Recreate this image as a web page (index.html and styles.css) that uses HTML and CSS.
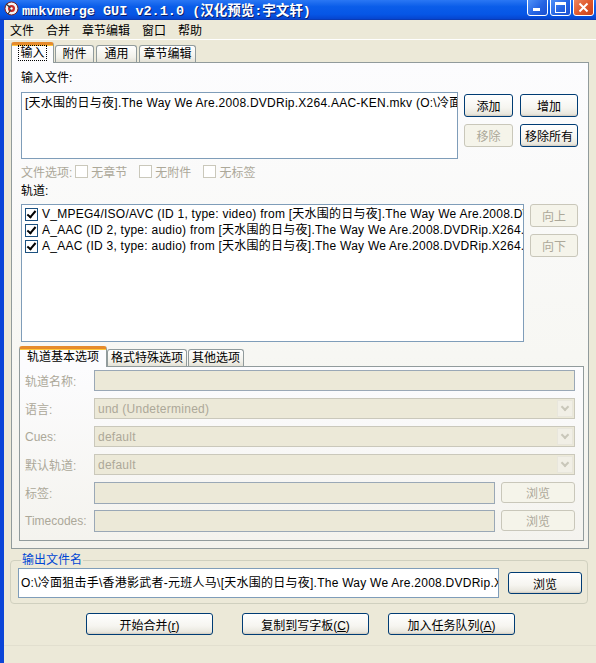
FILE: index.html
```html
<!DOCTYPE html>
<html lang="zh-CN">
<head>
    <meta charset="UTF-8">
    <title>mmkvmerge GUI</title>
    <link rel="stylesheet" href="styles.css">
</head>
<body>
<div class="window">
    <div class="titlebar">
        <svg class="app-icon" width="15" height="15" viewBox="0 0 15 15">
            <circle cx="7.5" cy="7.5" r="6.5" fill="#f4f4f4" stroke="#7a1d1d" stroke-width="1"/>
            <circle cx="7.5" cy="7.5" r="3.5" fill="#c92a2a"/>
            <path d="M2 3 L7.5 7.5 L4 13" stroke="#333" stroke-width="1.2" fill="none"/>
            <circle cx="7.5" cy="7.5" r="1.2" fill="#fff"/>
        </svg>
        <span class="title">mmkvmerge GUI v2.1.0 (汉化预览:宇文轩)</span>
        <div class="caption-btns">
            <span class="cap cap-min"><i></i></span>
            <span class="cap cap-max"><i></i></span>
            <span class="cap cap-close">
                <svg width="11" height="11" viewBox="0 0 11 11"><path d="M1.5 1.5 L9.5 9.5 M9.5 1.5 L1.5 9.5" stroke="#fff" stroke-width="2"/></svg>
            </span>
        </div>
    </div>

    <div class="menubar">
        <span>文件</span><span>合并</span><span>章节编辑</span><span>窗口</span><span>帮助</span>
    </div>

    <div class="client">
        <div class="tabs main-tabs">
            <span class="tab active"><span class="focus">输入</span></span>
            <span class="tab">附件</span>
            <span class="tab">通用</span>
            <span class="tab">章节编辑</span>
        </div>

        <div class="tab-panel">
            <div class="label">输入文件:</div>
            <div class="files-row">
                <div class="listbox files">
                    <div class="item">[天水围的日与夜].The Way We Are.2008.DVDRip.X264.AAC-KEN.mkv (O:\冷面狙击手\香港影武者-元班人马)</div>
                </div>
                <div class="file-buttons">
                    <button class="btn">添加</button>
                    <button class="btn">增加</button>
                    <button class="btn" disabled>移除</button>
                    <button class="btn">移除所有</button>
                </div>
            </div>

            <div class="options disabled">
                <span>文件选项:</span>
                <label class="check"><span class="box"></span>无章节</label>
                <label class="check"><span class="box"></span>无附件</label>
                <label class="check"><span class="box"></span>无标签</label>
            </div>

            <div class="label tracks-label">轨道:</div>
            <div class="tracks-row">
                <div class="listbox tracks">
                    <div class="item"><span class="box checked"></span>V_MPEG4/ISO/AVC (ID 1, type: video) from [天水围的日与夜].The Way We Are.2008.DVDRip.X264.AAC-KEN.mkv</div>
                    <div class="item"><span class="box checked"></span>A_AAC (ID 2, type: audio) from [天水围的日与夜].The Way We Are.2008.DVDRip.X264.AAC-KEN.mkv</div>
                    <div class="item"><span class="box checked"></span>A_AAC (ID 3, type: audio) from [天水围的日与夜].The Way We Are.2008.DVDRip.X264.AAC-KEN.mkv</div>
                </div>
                <div class="track-buttons">
                    <button class="btn" disabled>向上</button>
                    <button class="btn" disabled>向下</button>
                </div>
            </div>

            <div class="tabs sub-tabs">
                <span class="tab active">轨道基本选项</span>
                <span class="tab">格式特殊选项</span>
                <span class="tab">其他选项</span>
            </div>
            <div class="sub-panel">
                <div class="field-row">
                    <span class="field-label">轨道名称:</span>
                    <div class="textbox"></div>
                </div>
                <div class="field-row">
                    <span class="field-label">语言:</span>
                    <div class="combo"><span>und (Undetermined)</span><span class="drop"></span></div>
                </div>
                <div class="field-row">
                    <span class="field-label">Cues:</span>
                    <div class="combo"><span>default</span><span class="drop"></span></div>
                </div>
                <div class="field-row">
                    <span class="field-label">默认轨道:</span>
                    <div class="combo"><span>default</span><span class="drop"></span></div>
                </div>
                <div class="field-row">
                    <span class="field-label">标签:</span>
                    <div class="textbox short"></div>
                    <button class="btn browse" disabled>浏览</button>
                </div>
                <div class="field-row">
                    <span class="field-label">Timecodes:</span>
                    <div class="textbox short"></div>
                    <button class="btn browse" disabled>浏览</button>
                </div>
            </div>
        </div>

        <fieldset class="group">
            <legend>输出文件名</legend>
            <div class="output-row">
                <div class="output">O:\冷面狙击手\香港影武者-元班人马\[天水围的日与夜].The Way We Are.2008.DVDRip.X264.AAC-KEN.mkv</div>
                <button class="btn browse-out">浏览</button>
            </div>
        </fieldset>

        <div class="actions">
            <button class="btn action">开始合并(<u>r</u>)</button>
            <button class="btn action copy">复制到写字板(<u>C</u>)</button>
            <button class="btn action queue">加入任务队列(<u>A</u>)</button>
        </div>
    </div>
    <div class="statusbar"></div>
</div>
</body>
</html>
```

FILE: styles.css
```css
body {
    margin: 0;
    width: 596px;
    height: 663px;
    overflow: hidden;
    font-family: "Liberation Sans", "Noto Sans CJK SC", sans-serif;
    font-size: 12px;
    color: #000;
    background-color: #ece9d8;
}

.window {
    height: 663px;
    border-left: 4px solid #0b45d8;
    background-color: #ece9d8;
    display: flex;
    flex-direction: column;
}

/* title bar */
.titlebar {
    height: 19px;
    margin-left: -4px;
    padding-left: 4px;
    display: flex;
    align-items: center;
    background: linear-gradient(#2a77f4, #0a5de9 35%, #0656e6 75%, #0645cf);
    border-bottom: 1px solid #0a3bb5;
}

.app-icon {
    margin-top: -2px;
}

.title {
    margin-left: 3px;
    font-family: "Liberation Mono", "Noto Sans CJK SC", monospace;
    font-weight: bold;
    font-size: 13.5px;
    color: #fff;
    text-shadow: 1px 1px 0 #0a1e6b;
    white-space: nowrap;
    margin-top: -2px;
}

.caption-btns {
    margin-left: auto;
    margin-right: 2px;
    display: flex;
    gap: 2px;
    align-self: flex-start;
    margin-top: -5px;
}

.cap {
    width: 19px;
    height: 19px;
    border: 1px solid #fff;
    border-radius: 3px;
    background: linear-gradient(135deg, #5a9bfc, #2463e3 60%, #1b4fd0);
    display: flex;
    align-items: center;
    justify-content: center;
    position: relative;
}

.cap-min i {
    position: absolute;
    left: 5px;
    bottom: 4px;
    width: 7px;
    height: 3px;
    background: #fff;
}

.cap-max i {
    width: 9px;
    height: 7px;
    border: 1px solid #fff;
    border-top-width: 3px;
    margin-top: 4px;
}

.cap-close {
    background: linear-gradient(135deg, #f0906b, #e05a2e 55%, #c8401a);
}

.cap-close svg {
    margin-top: 4px;
}

/* menu */
.menubar {
    height: 19px;
    display: flex;
    align-items: center;
    border-bottom: 1px solid #fff;
}

.menubar span {
    padding: 0 6px;
}

/* client area */
.client {
    padding-left: 7px;
    padding-top: 2px;
}

.tabs {
    display: flex;
    align-items: flex-end;
    height: 20px;
    position: relative;
    z-index: 1;
}

.tab {
    height: 17px;
    line-height: 16px;
    text-align: center;
    border: 1px solid #919b9c;
    border-bottom: none;
    border-radius: 3px 3px 0 0;
    background: linear-gradient(#fff, #f2f1ea 70%, #e3e1d6);
    margin-right: 2px;
    box-sizing: border-box;
}

.tab.active {
    line-height: 16px;
    background: #fcfcfe;
    border-top: 3px solid #e68b2c;
    box-shadow: inset 0 1px 0 #ffc73c;
    margin-bottom: -1px;
    height: 21px;
}

.main-tabs .tab:nth-child(1) { width: 43px; margin-right: 1px; }
.main-tabs .tab:nth-child(2) { width: 39px; margin-right: 2px; }
.main-tabs .tab:nth-child(3) { width: 41px; margin-right: 2px; }
.main-tabs .tab:nth-child(4) { width: 57px; }

.focus {
    outline: 1px dotted #000;
    outline-offset: 0;
    padding: 0 1px;
}

.tab-panel {
    width: 578px;
    height: 487px;
    box-sizing: border-box;
    border: 1px solid #919b9c;
    background: linear-gradient(#fcfcfe, #f7f7f3 60%, #f3f2ec);
    padding: 8px 9px 0 9px;
}

.label {
    height: 14px;
    line-height: 14px;
}

.listbox {
    box-sizing: border-box;
    border: 1px solid #7f9db9;
    background: #fff;
    overflow: hidden;
    white-space: nowrap;
}

.files-row {
    display: flex;
    margin-top: 7px;
}

.listbox.files {
    width: 437px;
    height: 67px;
    padding: 2px 3px;
}

.item {
    height: 16px;
    line-height: 16px;
    display: flex;
    align-items: center;
    letter-spacing: 0.25px;
}

.file-buttons {
    margin-left: 6px;
    margin-top: 2px;
    display: grid;
    grid-template-columns: 49px 58px;
    grid-auto-rows: 23px;
    column-gap: 7px;
    row-gap: 7px;
    align-self: flex-start;
}

.btn {
    font-family: inherit;
    font-size: 12px;
    color: #000;
    padding: 0;
    box-sizing: border-box;
    border: 1px solid #003c74;
    border-radius: 3px;
    background: linear-gradient(#fff, #f6f5f0 60%, #e9e7de 90%, #d6d0c5);
    box-shadow: inset 0 -1px 0 #d6d0c5;
}

.btn:disabled {
    color: #aca899;
    border-color: #c9c7ba;
    background: #f5f4ea;
    box-shadow: none;
}

.options {
    margin-top: 5px;
    height: 14px;
    display: flex;
    align-items: center;
    color: #aca899;
}

.options > span {
    margin-right: 3px;
}

.check {
    display: flex;
    align-items: center;
    margin-right: 12px;
}

.box {
    width: 13px;
    height: 13px;
    box-sizing: border-box;
    border: 1px solid #1c5180;
    background: #fff;
    margin-right: 3px;
    flex-shrink: 0;
    position: relative;
}

.options .box {
    border-color: #cac8bb;
}

.box.checked::after {
    content: "";
    position: absolute;
    left: 3px;
    top: 0px;
    width: 3px;
    height: 7px;
    border: solid #000;
    border-width: 0 2px 2px 0;
    transform: rotate(40deg);
}

.tracks-label {
    margin-top: 6px;
}

.tracks-row {
    display: flex;
    margin-top: 6px;
}

.listbox.tracks {
    width: 503px;
    height: 138px;
    padding: 1px 3px;
}

.tracks .box {
    margin-right: 4px;
    letter-spacing: 0;
}

.track-buttons {
    margin-left: 6px;
    display: flex;
    flex-direction: column;
    gap: 7px;
}

.track-buttons .btn {
    width: 48px;
    height: 23px;
}

/* sub tabs */
.sub-tabs {
    margin-top: 4px;
    margin-left: -9px;
    padding-left: 7px;
}

.sub-tabs .tab {
    padding: 0 3px;
    margin-right: 1px;
}

.sub-tabs .tab.active {
    padding: 0 7px;
    margin-right: 0;
}

.sub-panel {
    width: 565px;
    height: 175px;
    margin-left: -2px;
    box-sizing: border-box;
    border: 1px solid #919b9c;
    background: linear-gradient(#fcfcfe, #f4f3ee);
    padding: 3px 7px 0 5px;
    display: flex;
    flex-direction: column;
    gap: 7px;
}

.field-row {
    display: flex;
    align-items: center;
    height: 21px;
}

.field-label {
    width: 69px;
    color: #aca899;
}

.textbox {
    width: 481px;
    height: 21px;
    box-sizing: border-box;
    border: 1px solid #9aa8b6;
    background: #ece9d8;
}

.textbox.short {
    width: 401px;
    height: 22px;
}

.combo {
    width: 481px;
    height: 21px;
    box-sizing: border-box;
    border: 1px solid #cac8bb;
    background: #ece9d8;
    color: #aca899;
    display: flex;
    align-items: center;
    padding-left: 3px;
    letter-spacing: 0.25px;
}

.drop {
    margin-left: auto;
    width: 16px;
    height: 17px;
    margin-right: 1px;
    border: 1px solid #e8e6dc;
    background: #f1efe6;
    box-sizing: border-box;
    position: relative;
}

.drop::after {
    content: "";
    position: absolute;
    left: 4px;
    top: 3px;
    width: 4px;
    height: 4px;
    border: solid #c9c7ba;
    border-width: 0 2px 2px 0;
    transform: rotate(45deg);
}

.browse {
    width: 74px;
    height: 21px;
    margin-left: 6px;
}

/* output group */
.group {
    width: 578px;
    box-sizing: border-box;
    margin: 4px 0 0 -1px;
    padding: 1px 5px 5px 7px;
    border: 1px solid #d0d0bf;
    border-radius: 4px;
}

.group legend {
    color: #0046d5;
    padding: 0 1px;
    margin-left: 3px;
    line-height: 14px;
}

.output-row {
    display: flex;
    align-items: center;
}

.output {
    width: 481px;
    height: 30px;
    line-height: 28px;
    box-sizing: border-box;
    border: 1px solid #7f9db9;
    background: #fff;
    padding: 0 2px;
    white-space: nowrap;
    overflow: hidden;
    letter-spacing: 0.25px;
}

.browse-out {
    width: 74px;
    height: 22px;
    margin-left: 9px;
}

/* bottom buttons */
.actions {
    display: flex;
    margin-top: 9px;
    padding-left: 75px;
}

.action {
    width: 127px;
    height: 22px;
}

.action.copy {
    margin-left: 29px;
}

.action.queue {
    margin-left: 19px;
}

.statusbar {
    margin-top: 10px;
    flex: 1;
    border-top: 1px solid #e2dfcf;
    background: #ece9d8;
}
```
